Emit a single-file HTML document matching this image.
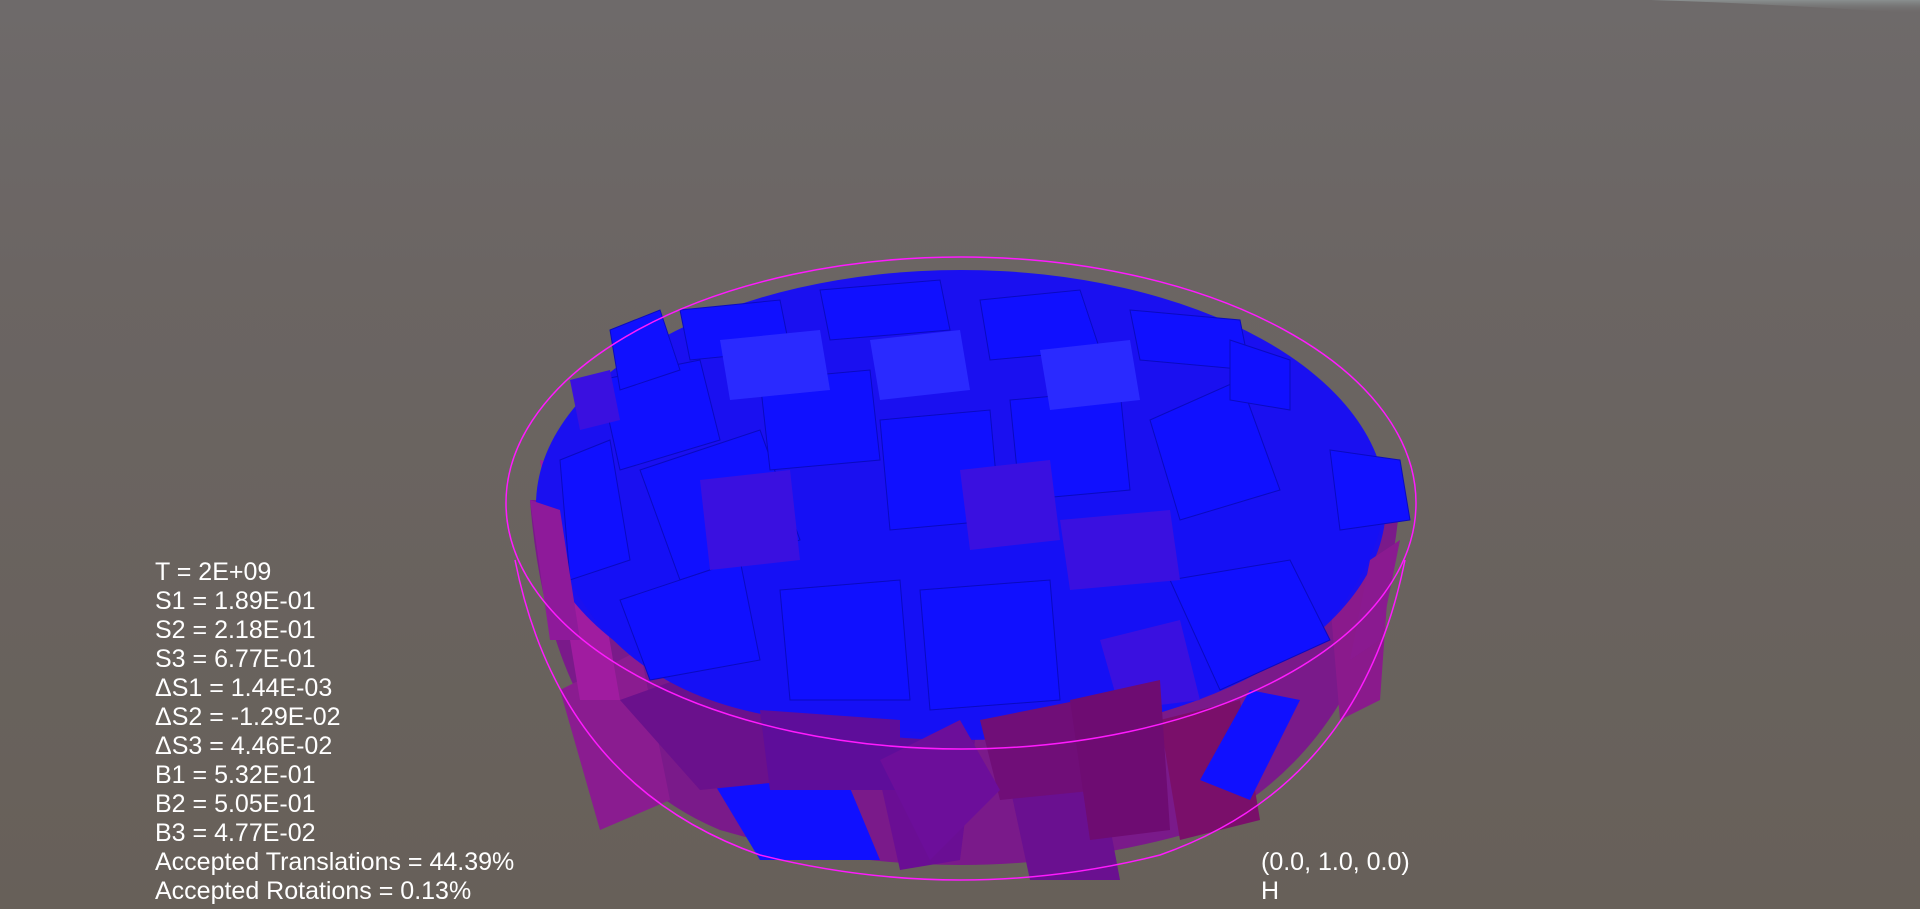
<!DOCTYPE html>
<html><head><meta charset="utf-8"><style>
html,body{margin:0;padding:0;width:1920px;height:909px;overflow:hidden;background:linear-gradient(#6e6a6a 0%,#6b6563 30%,#676059 100%);}
svg{position:absolute;left:0;top:0}
.t{position:absolute;color:#fff;font-family:"Liberation Sans",sans-serif;font-size:25px;line-height:29px;white-space:pre}
</style></head><body>
<svg width="1920" height="909" viewBox="0 0 1920 909">
<defs><linearGradient id="hz" x1="0" y1="0" x2="0" y2="1"><stop offset="0" stop-color="#8a9090"/><stop offset="1" stop-color="#6e6a6a" stop-opacity="0"/></linearGradient></defs>
<path d="M1650 0 L1920 0 L1920 14 Q1780 4 1650 0Z" fill="url(#hz)"/>
<path d="M530 500 Q550 760 720 830 Q960 900 1200 830 Q1380 740 1400 500 Z" fill="#7a1a8a"/>
<polygon points="560,690 640,650 670,800 600,830" fill="#8a1c90"/>
<polygon points="700,760 830,740 880,860 760,860" fill="#1010ff"/>
<polygon points="1000,740 1090,720 1120,880 1030,880" fill="#6a1090"/>
<polygon points="1160,720 1240,700 1260,820 1180,840" fill="#7a0f6a"/>
<polygon points="1250,690 1300,700 1250,800 1200,780" fill="#1010ff"/>
<polygon points="620,700 760,650 800,780 700,790" fill="#6a118c"/>
<polygon points="860,690 980,700 960,860 900,870" fill="#6a0e94"/>
<polygon points="770,710 920,720 940,780 780,780" fill="#5c0c9a"/>
<polygon points="1330,600 1390,560 1380,700 1340,720" fill="#8a1a8c"/>
<polygon points="540,460 580,470 620,700 580,700" fill="#a01ca0"/>
<ellipse cx="961" cy="505" rx="425" ry="235" fill="#1a10f0"/>
<path d="M560 560 Q620 700 800 720 L1000 740 Q1200 730 1330 620 Q1380 560 1385 500 L540 500Z" fill="#1510f5"/>
<g fill="#1010ff" stroke="#0a0ac0" stroke-width="1">
<polygon points="600,380 700,360 720,440 620,470"/>
<polygon points="640,470 760,430 800,540 680,580"/>
<polygon points="760,380 870,370 880,460 770,470"/>
<polygon points="880,420 990,410 1000,520 890,530"/>
<polygon points="1010,400 1120,390 1130,490 1020,500"/>
<polygon points="1150,420 1240,380 1280,490 1180,520"/>
<polygon points="920,590 1050,580 1060,700 930,710"/>
<polygon points="780,590 900,580 910,700 790,700"/>
<polygon points="1170,580 1290,560 1330,640 1220,690"/>
<polygon points="620,600 740,560 760,660 650,680"/>
<polygon points="1330,450 1400,460 1410,520 1340,530"/>
<polygon points="560,460 610,440 630,560 570,580"/>
<polygon points="680,310 780,300 790,350 690,360"/>
<polygon points="820,290 940,280 950,330 830,340"/>
<polygon points="980,300 1080,290 1100,350 990,360"/>
<polygon points="1130,310 1240,320 1250,370 1140,360"/>
<polygon points="610,330 660,310 680,370 620,390"/>
<polygon points="1230,340 1290,360 1290,410 1230,400"/>
</g>
<g fill="#3a10e0">
<polygon points="700,480 790,470 800,560 710,570"/>
<polygon points="1060,520 1170,510 1180,580 1070,590"/>
<polygon points="960,470 1050,460 1060,540 970,550"/>
<polygon points="1100,640 1180,620 1200,700 1120,710"/>
<polygon points="570,380 610,370 620,420 580,430"/>
</g>
<g fill="#2a2aff">
<polygon points="720,340 820,330 830,390 730,400"/>
<polygon points="870,340 960,330 970,390 880,400"/>
<polygon points="1040,350 1130,340 1140,400 1050,410"/>
</g>
<polygon points="760,710 900,720 900,790 770,790" fill="#5e0d9a"/>
<polygon points="980,720 1080,700 1100,790 1000,800" fill="#700e78"/>
<polygon points="880,760 960,720 1000,790 930,860" fill="#6c0e9a"/>
<polygon points="1070,700 1160,680 1170,830 1090,840" fill="#6e0c72"/>
<polygon points="530,500 560,510 580,640 550,640" fill="#8e1a9a"/>
<polygon points="1370,560 1400,540 1380,640 1350,660" fill="#8a1a90"/>
<g fill="none" stroke="#ff1aff" stroke-width="1.5">
<ellipse cx="961" cy="503" rx="455" ry="246"/>
<path d="M515 560 Q560 785 760 855 Q961 905 1160 855 Q1360 785 1405 560"/>
</g>
</svg>
<div class="t" style="left:155px;top:558px">T = 2E+09
S1 = 1.89E-01
S2 = 2.18E-01
S3 = 6.77E-01
ΔS1 = 1.44E-03
ΔS2 = -1.29E-02
ΔS3 = 4.46E-02
B1 = 5.32E-01
B2 = 5.05E-01
B3 = 4.77E-02
Accepted Translations = 44.39%
Accepted Rotations = 0.13%</div>
<div class="t" style="left:1261px;top:848px">(0.0, 1.0, 0.0)
H</div>
</body></html>
